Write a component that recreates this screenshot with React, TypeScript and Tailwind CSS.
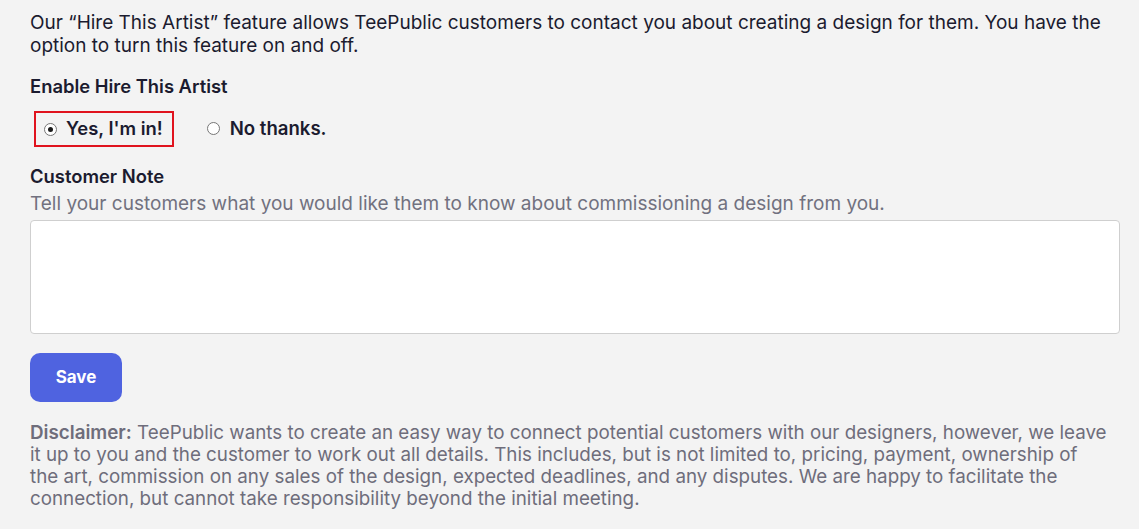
import React, { useState } from 'react';

const Radio: React.FC<{ checked: boolean }> = ({ checked }) => (
  <span className="flex h-[13px] w-[13px] items-center justify-center rounded-full border border-[#767676] bg-white">
    {checked && <span className="h-[5px] w-[5px] rounded-full bg-[#1a1a1a]" />}
  </span>
);

export default function App() {
  const [enabled, setEnabled] = useState(true);

  return (
    <div className="min-h-[529px] w-full bg-[#f3f3f3] pl-[30px] pr-[19px] pt-[11px] font-['Inter',sans-serif] text-[#1b1b2f]">
      <p className="text-[19px] leading-[23px]">
        Our “Hire This Artist” feature allows TeePublic customers to contact you about creating a design for them. You have the
        <br />
        option to turn this feature on and off.
      </p>

      <h3 className="mt-[17px] text-[18.4px] font-semibold leading-[24px]">Enable Hire This Artist</h3>

      <div className="mt-[13px] flex items-center">
        <label
          onClick={() => setEnabled(true)}
          className="ml-[4px] flex h-[36px] cursor-pointer items-center gap-[9px] border-2 border-[#e0131e] pl-[8px] pr-[9px] text-[18.4px] font-semibold"
        >
          <Radio checked={enabled} />
          Yes, I'm in!
        </label>
        <label
          onClick={() => setEnabled(false)}
          className="ml-[33px] flex cursor-pointer items-center gap-[10px] text-[18.6px] font-semibold"
        >
          <Radio checked={!enabled} />
          No thanks.
        </label>
      </div>

      <h3 className="mt-[17px] text-[18.4px] font-semibold leading-[24px]">Customer Note</h3>
      <p className="mt-[4px] text-[19px] leading-[23px] text-[#71717f]">
        Tell your customers what you would like them to know about commissioning a design from you.
      </p>

      <textarea className="mt-[5px] block h-[114px] w-full resize-none rounded-[4px] border border-[#cfcfcf] bg-white outline-none" />

      <button className="mt-[19px] h-[49px] w-[92px] rounded-[10px] bg-[#4f63e0] text-[17px] font-bold text-white">
        Save
      </button>

      <p className="mt-[20px] text-[18.8px] leading-[22px] text-[#6e6d7b]">
        <span className="font-semibold">Disclaimer:</span> TeePublic wants to create an easy way to connect potential customers with our designers, however, we leave
        <br />
        it up to you and the customer to work out all details. This includes, but is not limited to, pricing, payment, ownership of
        <br />
        the art, commission on any sales of the design, expected deadlines, and any disputes. We are happy to facilitate the
        <br />
        connection, but cannot take responsibility beyond the initial meeting.
      </p>
    </div>
  );
}
